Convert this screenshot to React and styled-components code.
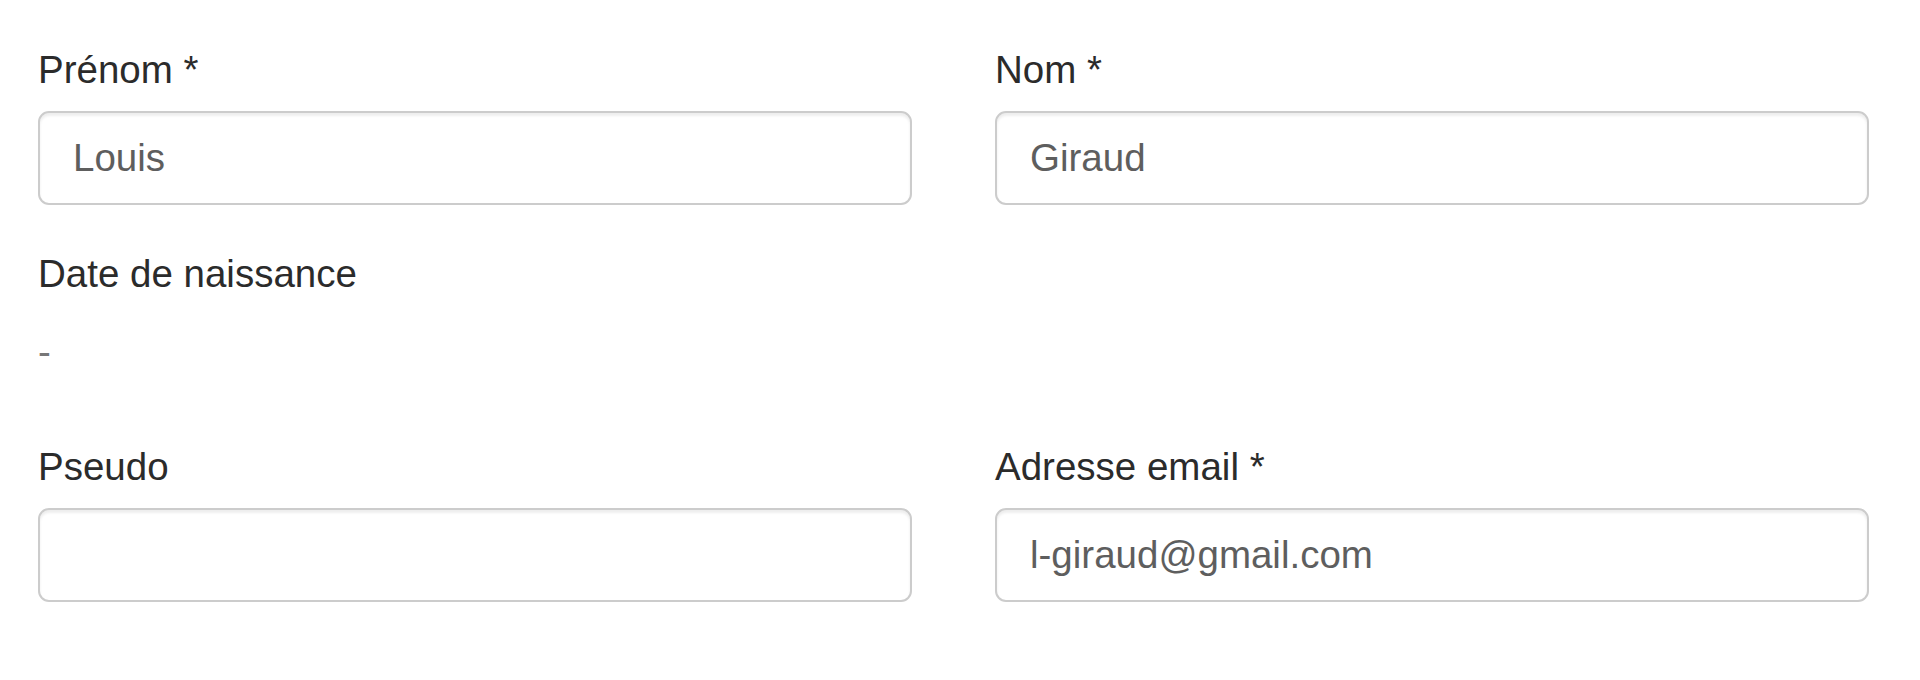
import React from 'react'
import styled, { createGlobalStyle } from 'styled-components'

const GlobalStyle = createGlobalStyle`
    body {
        margin: 0;
        background: #fff;
        font-family: "Liberation Sans", Arial, sans-serif;
        font-size: 38.5px;
        line-height: 55px;
        color: #333;
    }
`

const Page = styled.form`
    padding: 42px 51px 0 38px;
`

const Row = styled.div`
    display: grid;
    grid-template-columns: 1fr 1fr;
    column-gap: 83px;
`

const Group = styled.div`
    margin-bottom: 41px;
`

const Label = styled.label`
    display: block;
    height: 55px;
    margin-bottom: 14px;
    font-weight: normal;
    color: #2b2b2b;
`

const Input = styled.input`
    display: block;
    box-sizing: border-box;
    width: 100%;
    height: 94px;
    padding: 16px 33px;
    font-family: inherit;
    font-size: 38.5px;
    line-height: 55px;
    color: #5e5e5e;
    background: #fff;
    border: 2.75px solid #ccc;
    border-radius: 11px;
    box-shadow: inset 0 2.75px 2.75px rgba(0, 0, 0, 0.075);
    outline: none;
`

const Static = styled.p`
    margin: 0;
    padding: 9px 0 19px;
    color: #777;
`

const fields = [
    [
        { label: 'Prénom *', value: 'Louis' },
        { label: 'Nom *', value: 'Giraud' },
    ],
]

const App = () => {
    return (
        <>
            <GlobalStyle />
            <Page>
                {fields.map((row, i) => (
                    <Row key={i}>
                        {row.map(f => (
                            <Group key={f.label}>
                                <Label>{f.label}</Label>
                                <Input defaultValue={f.value} />
                            </Group>
                        ))}
                    </Row>
                ))}
                <Group>
                    <Label>Date de naissance</Label>
                    <Static>-</Static>
                </Group>
                <Row>
                    <Group>
                        <Label>Pseudo</Label>
                        <Input defaultValue="" />
                    </Group>
                    <Group>
                        <Label>Adresse email *</Label>
                        <Input defaultValue="l-giraud@gmail.com" />
                    </Group>
                </Row>
            </Page>
        </>
    )
}

export default App
